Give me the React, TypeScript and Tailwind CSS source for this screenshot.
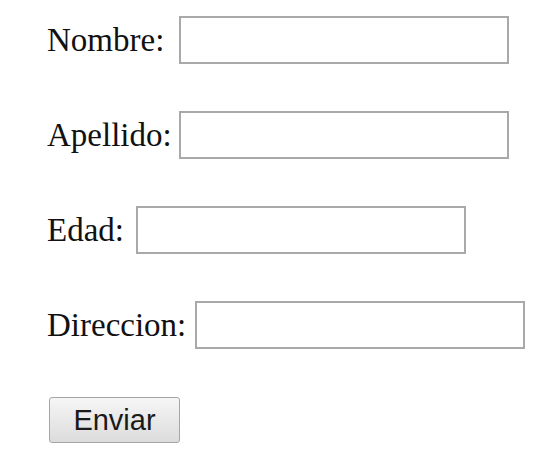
import React from "react";

const rows = [
  { label: "Nombre:", lw: "w-[122px]" },
  { label: "Apellido:", lw: "w-[122px]" },
  { label: "Edad:", lw: "w-[79px]" },
  { label: "Direccion:", lw: "w-[138px]" },
];

export default function App() {
  return (
    <div className="min-h-[467px] w-[559px] bg-white pl-[47px] pt-[16px]" style={{ fontFamily: '"Liberation Serif", "Times New Roman", serif' }}>
      <form className="flex flex-col gap-[47px]" onSubmit={(e) => e.preventDefault()}>
        {rows.map((r) => (
          <div key={r.label} className="flex h-[48px] items-center gap-[10px]">
            <span className={`${r.lw} shrink-0 whitespace-nowrap text-[33px] leading-none text-[#111]`}>{r.label}</span>
            <input
              type="text"
              className="h-[48px] w-[330px] border-2 border-[#a9a9a9] bg-white outline-none"
            />
          </div>
        ))}
        <div className="flex h-[48px] items-start">
          <button
            type="submit"
            className="ml-[2px] mt-[1px] flex h-[46px] w-[131px] items-center justify-center rounded-[3px] border border-[#a6a6a6] bg-gradient-to-b from-[#f6f6f6] to-[#dcdcdc] text-[29px] leading-none text-[#1a1a1a]"
            style={{ fontFamily: '"Liberation Sans", Arial, sans-serif' }}
          >
            Enviar
          </button>
        </div>
      </form>
    </div>
  );
}
